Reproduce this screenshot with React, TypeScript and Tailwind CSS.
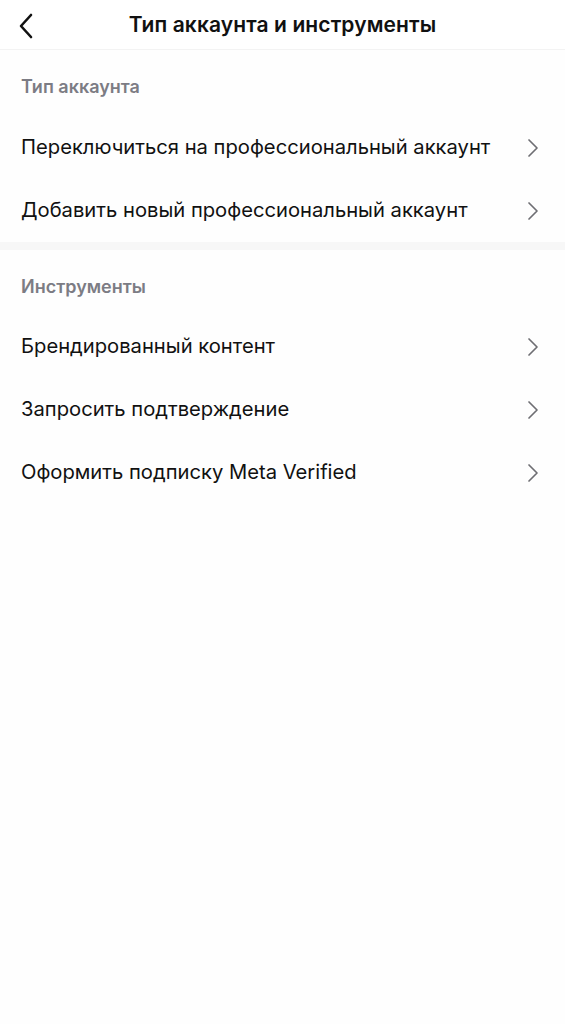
type Section = { title: string; items: string[] };

const sections: Section[] = [
  {
    title: "Тип аккаунта",
    items: ["Переключиться на профессиональный аккаунт", "Добавить новый профессиональный аккаунт"],
  },
  {
    title: "Инструменты",
    items: ["Брендированный контент", "Запросить подтверждение", "Оформить подписку Meta Verified"],
  },
];

function Chevron() {
  return (
    <svg width="12" height="20" viewBox="0 0 12 20" fill="none">
      <path d="M2 2 L10 10 L2 18" stroke="#6e6e73" strokeWidth="1.7" strokeLinecap="round" strokeLinejoin="round" />
    </svg>
  );
}

function Row({ label }: { label: string }) {
  return (
    <div className="h-[63px] pl-[21px] pr-[26px] flex items-center justify-between">
      <span className="text-[20.2px] text-[#111]">{label}</span>
      <Chevron />
    </div>
  );
}

export default function App() {
  return (
    <div className="min-h-[1024px] w-[565px] bg-[#fefefe]" style={{ fontFamily: "Inter, 'Noto Sans', sans-serif" }}>
      <header className="h-[50px] relative flex items-center justify-center border-b border-[#f3f3f3] bg-white">
        <button className="absolute left-[12px] top-[8px] p-1">
          <svg width="20" height="28" viewBox="0 0 20 28" fill="none">
            <path d="M15 3 L5 14 L15 25" stroke="#111" strokeWidth="2.6" strokeLinecap="round" strokeLinejoin="round" />
          </svg>
        </button>
        <h1 className="text-[21px] font-semibold text-[#111] tracking-[0.1px]">Тип аккаунта и инструменты</h1>
      </header>

      {sections.map((s, i) => (
        <section key={s.title} className={i > 0 ? "border-t-[8px] border-[#f7f7f7]" : ""}>
          <div
            className={`pl-[21px] text-[18px] leading-[24px] font-semibold text-[#7c7c84] ${
              i > 0 ? "pt-[25px] pb-[16px]" : "pt-[25px] pb-[17px]"
            }`}
          >
            {s.title}
          </div>
          {s.items.map((it) => (
            <Row key={it} label={it} />
          ))}
        </section>
      ))}
    </div>
  );
}
